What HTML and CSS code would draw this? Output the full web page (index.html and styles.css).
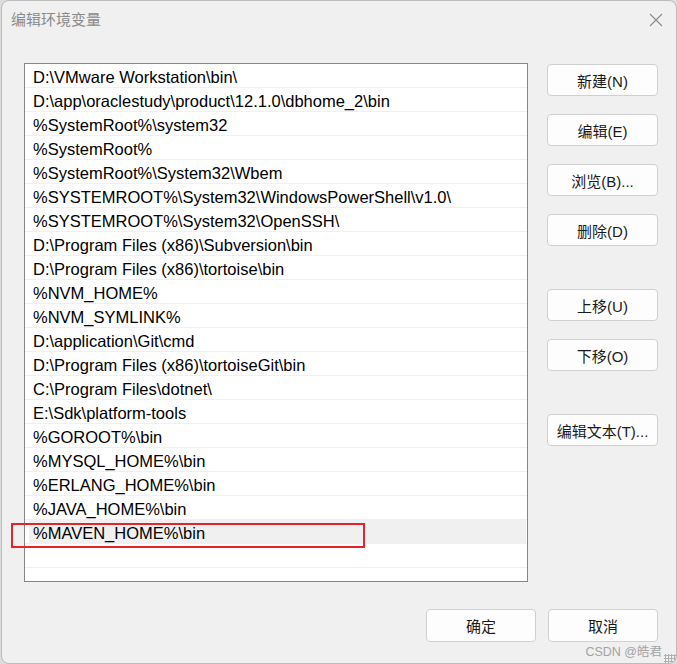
FILE: index.html
```html
<!DOCTYPE html>
<html lang="zh-CN">
<head>
<meta charset="utf-8">
<title>编辑环境变量</title>
<link rel="stylesheet" href="styles.css">
</head>
<body>
<div class="window">
  <div class="titlebar">
    <span class="title">编辑环境变量</span>
    <span class="close">
      <svg width="14" height="14" viewBox="0 0 14 14"><path d="M1 1 L13 13 M13 1 L1 13" stroke="#8a8a8a" stroke-width="1.1" fill="none"/></svg>
    </span>
  </div>
  <div class="content">
    <div class="main">
      <div class="list">
        <div class="row"><div class="cell">D:\VMware Workstation\bin\</div></div>
        <div class="row"><div class="cell">D:\app\oraclestudy\product\12.1.0\dbhome_2\bin</div></div>
        <div class="row"><div class="cell">%SystemRoot%\system32</div></div>
        <div class="row"><div class="cell">%SystemRoot%</div></div>
        <div class="row"><div class="cell">%SystemRoot%\System32\Wbem</div></div>
        <div class="row"><div class="cell">%SYSTEMROOT%\System32\WindowsPowerShell\v1.0\</div></div>
        <div class="row"><div class="cell">%SYSTEMROOT%\System32\OpenSSH\</div></div>
        <div class="row"><div class="cell">D:\Program Files (x86)\Subversion\bin</div></div>
        <div class="row"><div class="cell">D:\Program Files (x86)\tortoise\bin</div></div>
        <div class="row"><div class="cell">%NVM_HOME%</div></div>
        <div class="row"><div class="cell">%NVM_SYMLINK%</div></div>
        <div class="row"><div class="cell">D:\application\Git\cmd</div></div>
        <div class="row"><div class="cell">D:\Program Files (x86)\tortoiseGit\bin</div></div>
        <div class="row"><div class="cell">C:\Program Files\dotnet\</div></div>
        <div class="row"><div class="cell">E:\Sdk\platform-tools</div></div>
        <div class="row"><div class="cell">%GOROOT%\bin</div></div>
        <div class="row"><div class="cell">%MYSQL_HOME%\bin</div></div>
        <div class="row"><div class="cell">%ERLANG_HOME%\bin</div></div>
        <div class="row"><div class="cell">%JAVA_HOME%\bin</div></div>
        <div class="row selected"><div class="cell">%MAVEN_HOME%\bin</div></div>
        <div class="row"><div class="cell"></div></div>
        <div class="row"><div class="cell"></div></div>
      </div>
      <div class="side">
        <div class="group">
          <button class="btn">新建(N)</button>
          <button class="btn">编辑(E)</button>
          <button class="btn">浏览(B)...</button>
          <button class="btn">删除(D)</button>
        </div>
        <div class="group move">
          <button class="btn">上移(U)</button>
          <button class="btn">下移(O)</button>
        </div>
        <div class="group text">
          <button class="btn">编辑文本(T)...</button>
        </div>
      </div>
    </div>
    <div class="footer">
      <button class="btn">确定</button>
      <button class="btn">取消</button>
    </div>
  </div>
  <div class="mark"></div>
  <div class="watermark">CSDN @皓君</div>
  <div class="grip"></div>
</div>
</body>
</html>
```
FILE: styles.css
```css
html, body {
  margin: 0;
  padding: 0;
}
body {
  background: #dcdcdc;
  font-family: "Liberation Sans", "Noto Sans CJK SC", sans-serif;
  width: 677px;
  height: 664px;
  overflow: hidden;
}
.window {
  position: relative;
  box-sizing: border-box;
  margin-left: 1px;
  width: 676px;
  height: 664px;
  background: #f0f0f0;
  border: 1px solid #bcbcbc;
  border-radius: 8px;
  overflow: hidden;
}
.titlebar {
  height: 37px;
  display: flex;
  align-items: center;
  justify-content: space-between;
  padding: 0 13px 0 9px;
}
.title {
  font-family: "Noto Sans CJK SC", sans-serif;
  font-size: 15px;
  color: #8a8a8a;
  margin-top: -2px;
}
.close {
  display: flex;
  width: 14px;
  height: 14px;
}
.content {
  padding: 25px 18px 0 22px;
}
.main {
  display: flex;
  gap: 19px;
}
.list {
  box-sizing: border-box;
  width: 504px;
  height: 519px;
  background: #ffffff;
  border: 1px solid #868686;
  overflow: hidden;
}
.row {
  height: 23px;
  border-bottom: 1px solid #f0f0f0;
  display: flex;
}
.cell {
  flex: 1;
  margin: 0 1px 0 4px;
  padding-left: 4px;
  line-height: 27px;
  font-size: 16.5px;
  color: #000;
  white-space: nowrap;
  overflow: hidden;
}
.row.selected .cell {
  background: #f0f0f0;
}
.side {
  display: flex;
  flex-direction: column;
  padding-top: 1px;
}
.group {
  display: flex;
  flex-direction: column;
  gap: 18px;
}
.move {
  margin-top: 43px;
}
.text {
  margin-top: 43px;
}
.btn {
  box-sizing: border-box;
  width: 111px;
  height: 32px;
  background: #fdfdfd;
  border: 1px solid #d0d0d0;
  border-radius: 4px;
  font-family: "Liberation Sans", "Noto Sans CJK SC", sans-serif;
  font-size: 15px;
  color: #1a1a1a;
  padding: 0;
  margin: 0;
}
.footer {
  display: flex;
  justify-content: flex-end;
  gap: 12px;
  margin-top: 27px;
}
.footer .btn {
  width: 110px;
  height: 33px;
}
.mark {
  position: absolute;
  left: 9px;
  top: 522px;
  width: 350px;
  height: 21px;
  border: 2px solid #e3242b;
}
.watermark {
  position: absolute;
  right: 14px;
  top: 640px;
  font-family: "Liberation Sans", "Noto Sans CJK SC", sans-serif;
  font-size: 12.5px;
  color: #a3a3a3;
}
.grip {
  position: absolute;
  right: 0;
  bottom: 0;
  width: 12px;
  height: 9px;
  background-image: radial-gradient(circle, #b0b0b0 1px, transparent 1.2px);
  background-size: 3px 3px;
}
```
